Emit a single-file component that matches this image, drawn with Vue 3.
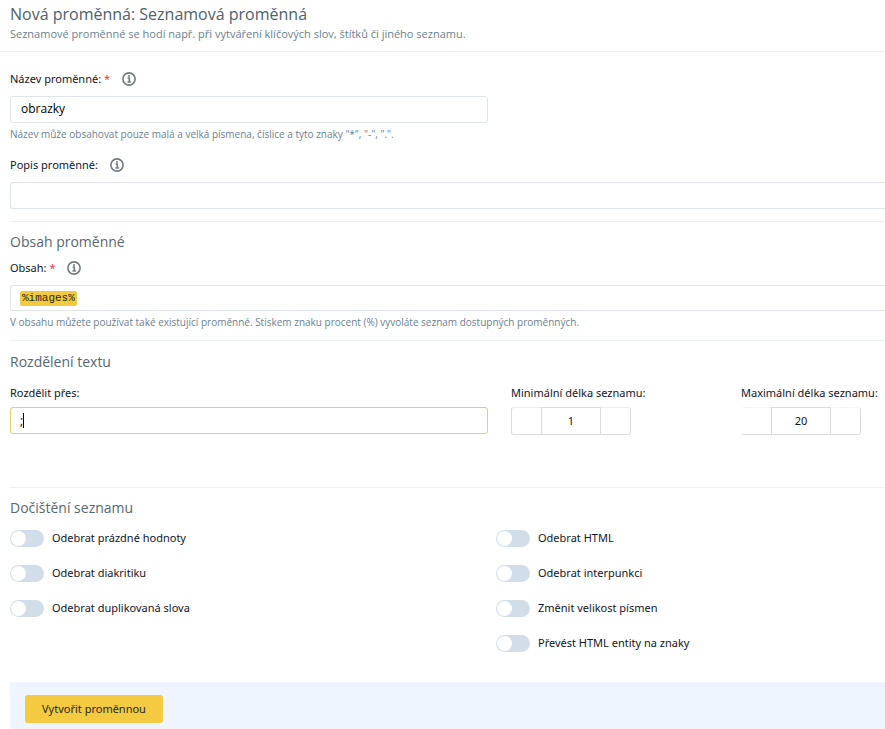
<script setup>
import { ref } from 'vue'

const name = ref('obrazky')
const description = ref('')
const content = ref('%images%')
const separator = ref(';')
const lengths = ref([
  { id: 'min-length', label: 'Minimální délka seznamu:', value: 1 },
  { id: 'max-length', label: 'Maximální délka seznamu:', value: 20, faded: true },
])
const cleanup = ref([
  [
    { id: 'empty', label: 'Odebrat prázdné hodnoty', on: false },
    { id: 'diacritics', label: 'Odebrat diakritiku', on: false },
    { id: 'duplicates', label: 'Odebrat duplikovaná slova', on: false },
  ],
  [
    { id: 'html', label: 'Odebrat HTML', on: false },
    { id: 'punctuation', label: 'Odebrat interpunkci', on: false },
    { id: 'case', label: 'Změnit velikost písmen', on: false },
    { id: 'entities', label: 'Převést HTML entity na znaky', on: false },
  ],
])
</script>

<template>
  <div class="page">
    <header class="head">
      <h1>Nová proměnná: Seznamová proměnná</h1>
      <p>Seznamové proměnné se hodí např. při vytváření klíčových slov, štítků či jiného seznamu.</p>
    </header>

    <form class="form" @submit.prevent>
      <section class="basics">
        <div class="columns">
          <div class="field">
            <div class="label-row">
              <label for="name">Název proměnné: <span class="required">*</span></label>
              <svg class="info" viewBox="0 0 14 14"><circle cx="7" cy="7" r="6.1" /><path d="M5.6 6H7.3V10M5.5 10H8.9" /><circle class="dot" cx="7" cy="3.9" r="1" /></svg>
            </div>
            <input id="name" v-model="name" class="text" type="text">
            <p class="hint">Název může obsahovat pouze malá a velká písmena, číslice a tyto znaky "*", "-", ".".</p>
          </div>
        </div>
        <div class="field wide description">
          <div class="label-row">
            <label for="description">Popis proměnné:</label>
            <svg class="info" viewBox="0 0 14 14"><circle cx="7" cy="7" r="6.1" /><path d="M5.6 6H7.3V10M5.5 10H8.9" /><circle class="dot" cx="7" cy="3.9" r="1" /></svg>
          </div>
          <input id="description" v-model="description" class="text" type="text">
        </div>
      </section>

      <section class="content">
        <h2>Obsah proměnné</h2>
        <div class="field wide">
          <div class="label-row">
            <label for="content">Obsah: <span class="required">*</span></label>
            <svg class="info" viewBox="0 0 14 14"><circle cx="7" cy="7" r="6.1" /><path d="M5.6 6H7.3V10M5.5 10H8.9" /><circle class="dot" cx="7" cy="3.9" r="1" /></svg>
          </div>
          <div class="editor">
            <input id="content" v-model="content" class="token" type="text" :style="{ width: content.length + 'ch' }">
          </div>
          <p class="hint">V obsahu můžete používat také existující proměnné. Stiskem znaku procent (%) vyvoláte seznam dostupných proměnných.</p>
        </div>
      </section>

      <section class="split">
        <h2>Rozdělení textu</h2>
        <div class="columns">
          <div class="field">
            <label for="separator">Rozdělit přes:</label>
            <div class="active-field">
              <input id="separator" v-model="separator" class="text active" type="text">
              <span class="caret"></span>
            </div>
          </div>
          <div v-for="item in lengths" :key="item.id" class="field">
            <label :for="item.id">{{ item.label }}</label>
            <div class="stepper" :class="{ faded: item.faded }">
              <button type="button" aria-label="Snížit" @click="item.value--"></button>
              <input :id="item.id" v-model="item.value" type="text" inputmode="numeric">
              <button type="button" aria-label="Zvýšit" @click="item.value++"></button>
            </div>
          </div>
        </div>
      </section>

      <section class="cleanup">
        <h2>Dočištění seznamu</h2>
        <div class="toggles">
          <div v-for="(group, i) in cleanup" :key="i" class="group">
            <label v-for="item in group" :key="item.id" class="toggle">
              <input v-model="item.on" type="checkbox" role="switch">
              <span>{{ item.label }}</span>
            </label>
          </div>
        </div>
      </section>

      <footer class="actions">
        <button type="submit">Vytvořit proměnnou</button>
      </footer>
    </form>
  </div>
</template>

<style>
body {
  margin: 0;
  background: #fff;
}
</style>

<style scoped>
* {
  box-sizing: border-box;
}

.page {
  font-family: "Noto Sans", "Open Sans", sans-serif;
  font-size: 11px;
  line-height: 16px;
  color: #12142a;
  overflow: hidden;
}

h1, h2, p {
  margin: 0;
  font-family: "Open Sans", "Noto Sans", sans-serif;
  font-weight: 400;
}

.head {
  padding: 4px 10px 9px;
  border-bottom: 1px solid #edf1f5;
}

h1 {
  font-size: 16px;
  line-height: 20px;
  color: #50616d;
}

.head p {
  margin-top: 2px;
  color: #6b7f92;
}

h2 {
  font-size: 14px;
  line-height: 20px;
  color: #566773;
}

.form {
  padding-left: 10px;
}

section + section {
  border-top: 1px solid #edf1f5;
}

.basics {
  padding: 19px 0 12px;
}

.description {
  margin-top: 16px;
}

.content {
  padding: 10px 0 11px;
}

.content .label-row {
  margin-top: 8px;
}

.split {
  padding: 11px 0 52px;
}

.split .columns {
  margin-top: 13px;
}

.cleanup {
  padding: 10px 0 30px;
}

.columns {
  display: grid;
  grid-template-columns: 501fr 230fr 144fr;
}

.columns .field:first-child {
  padding-right: 23px;
}

.label-row {
  display: flex;
  align-items: center;
  gap: 12px;
}

label {
  white-space: nowrap;
}

.required {
  color: #e5384a;
}

.info {
  width: 14px;
  height: 14px;
  fill: none;
  stroke: #727b83;
  stroke-width: 1.6;
}

.info .dot {
  fill: #727b83;
  stroke: none;
}

.text {
  display: block;
  width: 100%;
  height: 27px;
  padding: 0 10px 2px;
  border: 1px solid #dfe5ea;
  border-radius: 3px;
  outline: none;
  background: #fff;
  font: 12px "Open Sans", "Noto Sans", sans-serif;
  color: #000;
}

.label-row + .text,
.label-row + .editor {
  margin-top: 9px;
}

.wide .text,
.editor {
  border-right: 0;
  border-radius: 3px 0 0 3px;
}

.text.active {
  padding: 0 9px;
  border-color: #e5cf66;
}

.active-field {
  position: relative;
  margin-top: 6px;
}

.caret {
  position: absolute;
  top: 6px;
  left: 13px;
  width: 1px;
  height: 15px;
  background: #000;
}

.editor {
  display: flex;
  align-items: center;
  height: 26px;
  padding: 0 9px;
  border: 1px solid #dfe5ea;
  border-right: 0;
}

.token {
  height: 15px;
  padding: 0 2px;
  border: 0;
  border-radius: 2px;
  outline: none;
  background: #f1ca3f;
  box-sizing: content-box;
  font: 11px "Liberation Mono", monospace;
  color: #2b2718;
}

.hint {
  margin-top: 4px;
  font-size: 10px;
  line-height: 14px;
  color: #6b7f92;
}

.stepper {
  display: grid;
  grid-template-columns: 29px 60px 29px;
  width: 120px;
  height: 28px;
  margin-top: 6px;
  border: 1px solid #dcdcdc;
  border-top-color: #eee;
  border-radius: 3px;
}

.stepper.faded {
  border-left-color: #fff;
  border-top-color: #f6f6f6;
}

.stepper button {
  padding: 0;
  border: 0;
  background: transparent;
}

.stepper input {
  min-width: 0;
  margin-top: -1px;
  padding: 0 0 2px;
  border: 1px solid #dcdcdc;
  border-bottom: 0;
  outline: none;
  background: transparent;
  font: 11px "Noto Sans", "Open Sans", sans-serif;
  text-align: center;
  color: #12142a;
}

.toggles {
  display: grid;
  grid-template-columns: 486fr 389fr;
  margin-top: 11px;
}

.group {
  display: flex;
  flex-direction: column;
  align-items: flex-start;
  gap: 17px;
}

.toggle {
  display: flex;
  align-items: center;
  gap: 8px;
  height: 18px;
}

.toggle input {
  appearance: none;
  display: flex;
  align-items: center;
  width: 34px;
  height: 17px;
  margin: 0;
  padding: 0 1px;
  border-radius: 9px;
  background: #d2ddea;
}

.toggle input::before {
  content: "";
  width: 15px;
  height: 15px;
  border-radius: 50%;
  background: #fff;
}

.toggle input:checked {
  justify-content: flex-end;
  background: #f3ca40;
}

.actions {
  padding: 13px 15px 6px;
  background: #eef5ff;
}

.actions button {
  height: 28px;
  padding: 0 17px 2px;
  border: 0;
  border-radius: 3px;
  background: #f3ca40;
  font: 11px "Noto Sans", "Open Sans", sans-serif;
  color: #2b2718;
}
</style>
